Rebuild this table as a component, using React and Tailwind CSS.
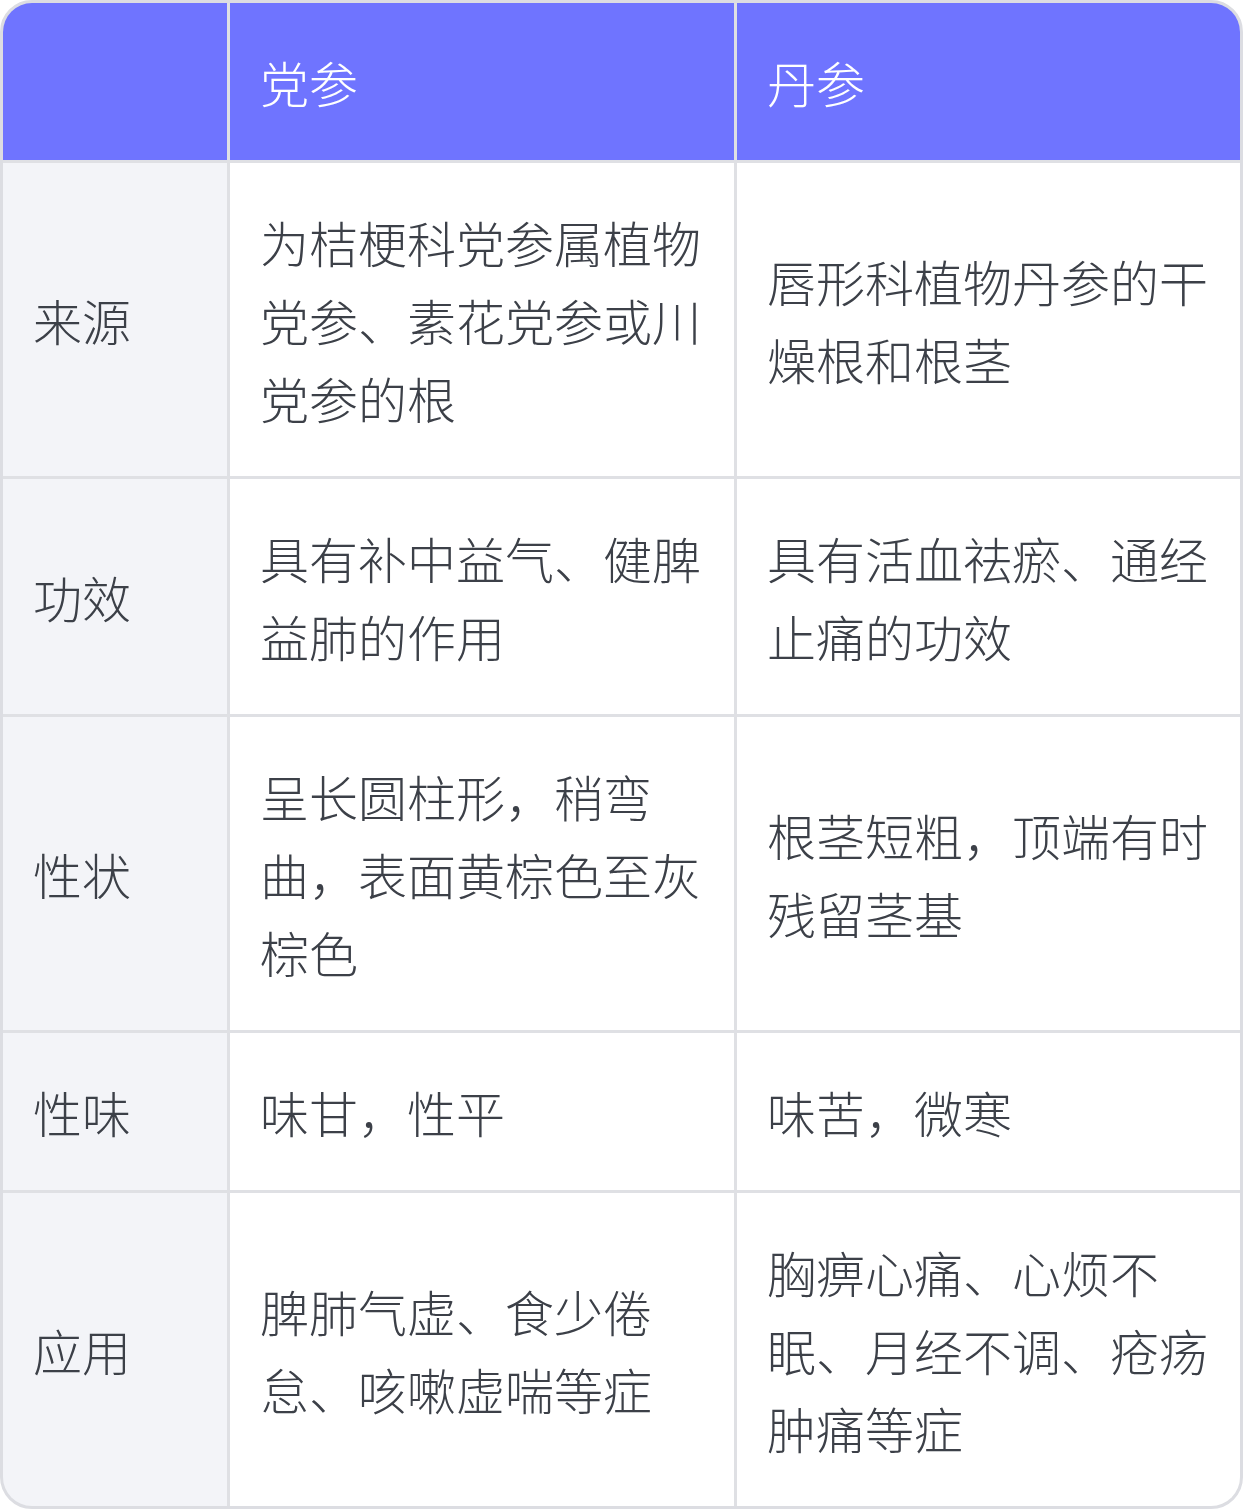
import React from 'react';

const rows = [
  ['来源', '为桔梗科党参属植物党参、素花党参或川党参的根', '唇形科植物丹参的干燥根和根茎'],
  ['功效', '具有补中益气、健脾益肺的作用', '具有活血祛瘀、通经止痛的功效'],
  ['性状', '呈长圆柱形，稍弯曲，表面黄棕色至灰棕色', '根茎短粗，顶端有时残留茎基'],
  ['性味', '味甘，性平', '味苦，微寒'],
  ['应用', '脾肺气虚、食少倦怠、咳嗽虚喘等症', '胸痹心痛、心烦不眠、月经不调、疮疡肿痛等症'],
];

export default function App() {
  return (
    <div
      className="w-[1243px] bg-white text-[49px] font-light leading-[78px] text-[#3c4048]"
      style={{ fontFamily: '"Noto Sans CJK SC", "Noto Sans", sans-serif' }}
    >
      <div className="grid grid-cols-[224px_504px_503px] gap-[3px] bg-[#dfe0e4] border-[3px] border-[#dcdde2] rounded-[32px] overflow-hidden">
        <div className="bg-[#6f74ff] py-[39.5px] px-[30px]"></div>
        <div className="bg-[#6f74ff] py-[39.5px] px-[30px] text-white">党参</div>
        <div className="bg-[#6f74ff] py-[39.5px] px-[30px] text-white">丹参</div>
        {rows.map(([label, a, b]) => (
          <React.Fragment key={label}>
            <div className="bg-[#f3f4f8] py-[39.5px] px-[30px] flex items-center">{label}</div>
            <div className="bg-white py-[39.5px] px-[30px] flex items-center">{a}</div>
            <div className="bg-white py-[39.5px] px-[30px] flex items-center">{b}</div>
          </React.Fragment>
        ))}
      </div>
    </div>
  );
}
